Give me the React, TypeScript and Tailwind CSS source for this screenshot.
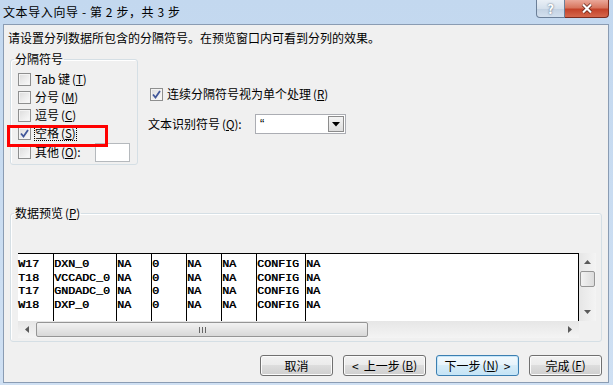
const rows = [
  ['W17', 'DXN_0', 'NA', '0', 'NA', 'NA', 'CONFIG', 'NA'],
  ['T18', 'VCCADC_0', 'NA', '0', 'NA', 'NA', 'CONFIG', 'NA'],
  ['T17', 'GNDADC_0', 'NA', '0', 'NA', 'NA', 'CONFIG', 'NA'],
  ['W18', 'DXP_0', 'NA', '0', 'NA', 'NA', 'CONFIG', 'NA'],
]

// widths of the preview columns, in px (7px per char)
const colWidths = ['w-[35px]', 'w-[63px]', 'w-[35px]', 'w-[35px]', 'w-[35px]', 'w-[35px]', 'w-[49px]', 'flex-1']

function CheckBox({ checked }: { checked?: boolean }) {
  return (
    <span className="w-[13px] h-[13px] shrink-0 border border-[#8e8f8f] bg-[linear-gradient(135deg,#dcdcdc,#fbfbfb)] shadow-[inset_0_0_0_1px_#f4f4f4] flex items-center justify-center">
      {checked && (
        <svg width="9" height="9" viewBox="0 0 9 9">
          <path d="M1 4.5 L3.5 7.5 L8 1" fill="none" stroke="#41579a" strokeWidth="1.8" />
        </svg>
      )}
    </span>
  )
}

function Key({ k }: { k: string }) {
  return (
    <span className="text-[11.5px] ml-[2px]">
      (<span className="underline">{k}</span>)
    </span>
  )
}

function Btn({ children, w, primary }: { children: React.ReactNode; w: string; primary?: boolean }) {
  return (
    <div
      className={
        primary
          ? `${w} h-[21px] rounded-[3px] border border-[#3c7fb1] bg-[linear-gradient(#f2f9fd_0%,#e6f3fb_49%,#d6ecf8_50%,#c4e3f5_100%)] shadow-[inset_0_0_0_1px_#c6e6f9] flex items-center justify-center`
          : `${w} h-[21px] rounded-[3px] border border-[#707070] bg-[linear-gradient(#f2f2f2_0%,#ebebeb_49%,#dddddd_50%,#cfcfcf_100%)] shadow-[inset_0_0_0_1px_#fbfbfb] flex items-center justify-center`
      }
    >
      {children}
    </div>
  )
}

export default function App() {
  return (
    <div className="w-[613px] h-[385px] bg-[linear-gradient(#c3d8ef,#cfe0f3)] flex flex-col text-[12px] text-black font-['Noto_Sans_CJK_SC','Noto_Sans',sans-serif] overflow-hidden">
      {/* title bar */}
      <div className="h-[24px] flex items-start shrink-0">
        <div className="pl-[3px] leading-[24px] flex-1 tracking-[0.6px]">文本导入向导 - 第 2 步，共 3 步</div>
        <div className="w-[29px] h-[18px] mt-0 border border-t-0 border-[#6b7f98] rounded-bl-[4px] bg-[linear-gradient(#e9eff6_0%,#d5e0ec_50%,#c2d1e2_51%,#d3e0ee_100%)] flex items-center justify-center text-white font-bold text-[13px] [text-shadow:0_0_2px_#3b4d66]">
          ?
        </div>
        <div className="w-[44px] h-[18px] mr-[4px] border border-t-0 border-l-0 border-[#7a2b1e] rounded-br-[4px] bg-[linear-gradient(#eaa899_0%,#d8765f_45%,#c4432a_55%,#d5674c_100%)] flex items-center justify-center">
          <svg width="12" height="11" viewBox="0 0 12 11">
            <path d="M2 1.5 L10 9.5 M10 1.5 L2 9.5" stroke="#5a1d12" strokeWidth="3.6" />
            <path d="M2 1.5 L10 9.5 M10 1.5 L2 9.5" stroke="#fff" strokeWidth="2.2" />
          </svg>
        </div>
      </div>

      {/* content panel */}
      <div className="ml-[3px] mr-[4px] mb-[2px] flex-1 border border-[#8a9cb3] bg-[#f0f0f0] flex flex-col relative">
        <div className="mt-[6px] pl-[4px] h-[14px] leading-[14px]">请设置分列数据所包含的分隔符号。在预览窗口内可看到分列的效果。</div>

        <div className="flex items-start mt-[7px]">
          <fieldset className="ml-[6px] w-[128px] h-[113px] border border-[#d5dfe5] rounded-[3px] pl-[3px] shadow-[inset_1px_1px_0_#fff]">
            <legend className="px-[1px] h-[14px] leading-[14px]">分隔符号</legend>
            <div className="pt-[4px] flex flex-col">
              <div className="h-[18px] flex items-center ml-[4px] gap-[4px]">
                <CheckBox />
                <span>Tab 键<Key k="T" /></span>
              </div>
              <div className="h-[18px] flex items-center ml-[4px] gap-[4px]">
                <CheckBox />
                <span>分号<Key k="M" /></span>
              </div>
              <div className="h-[18px] flex items-center ml-[4px] gap-[4px]">
                <CheckBox />
                <span>逗号<Key k="C" /></span>
              </div>
              <div className="h-[18px] flex items-center ml-[4px] gap-[3px]">
                <CheckBox checked />
                <span className="border border-dotted border-black px-0 leading-[13px]">空格<Key k="S" /></span>
              </div>
              <div className="h-[20px] flex items-center ml-[4px] gap-[4px]">
                <CheckBox />
                <span>其他<Key k="O" />:</span>
                <div className="ml-[10px] w-[35px] h-[19px] bg-white border border-[#b5b9bd]" />
              </div>
            </div>
          </fieldset>

          <div className="ml-[10px] flex flex-col">
            <div className="mt-[33px] h-[18px] flex items-center gap-[4px] ml-[2px]">
              <CheckBox checked />
              <span>连续分隔符号视为单个处理<Key k="R" /></span>
            </div>
            <div className="mt-[11px] h-[20px] flex items-center">
              <span className="w-[107px]">文本识别符号<Key k="Q" />:</span>
              <div className="w-[91px] h-[20px] bg-white border border-[#abadb3] flex items-stretch">
                <span className="flex-1 pl-[4px] leading-[18px] font-['Liberation_Sans',sans-serif] text-[13px]">“</span>
                <div className="w-[16px] m-[1px] border border-[#8c8c8c] bg-[linear-gradient(#f4f4f4,#dedede)] flex items-center justify-center">
                  <svg width="8" height="5" viewBox="0 0 8 5">
                    <path d="M0 0 L8 0 L4 4.5 Z" fill="#000" />
                  </svg>
                </div>
              </div>
            </div>
          </div>
        </div>

        {/* preview */}
        <fieldset className="mt-[41px] ml-[6px] w-[592px] h-[136px] border border-[#d5dfe5] rounded-[3px] pl-[3px] shadow-[inset_1px_1px_0_#fff]">
          <legend className="px-[1px] h-[14px] leading-[14px]">数据预览<Key k="P" /></legend>
          <div className="mt-[33px] ml-[4px] w-[578px] flex flex-col">
            <div className="flex h-[68px]">
              <div className="w-[561px] bg-white border-t border-r border-black flex font-['Liberation_Mono',monospace] text-[11.67px] leading-[13.67px] [text-shadow:0.4px_0_0_#000]">
                {colWidths.map((w, ci) => (
                  <div key={ci} className={ci === 0 ? `${w} pt-[4px]` : `${w} pt-[4px] border-l border-black`}>
                    {rows.map((r, ri) => (
                      <div key={ri} className="whitespace-pre">{r[ci]}</div>
                    ))}
                  </div>
                ))}
              </div>
              <div className="w-[17px] bg-[linear-gradient(90deg,#e6e6e6,#f4f4f4)] flex flex-col items-center">
                <svg className="mt-[7px]" width="7" height="4" viewBox="0 0 7 4">
                  <path d="M0 4 L3.5 0 L7 4 Z" fill="#5a5a5a" />
                </svg>
                <div className="mt-[7px] w-[15px] h-[16px] rounded-[2px] border border-[#959595] bg-[linear-gradient(90deg,#f2f2f2,#dcdcdc)]" />
                <div className="flex-1" />
                <svg className="mb-[7px]" width="7" height="4" viewBox="0 0 7 4">
                  <path d="M0 0 L7 0 L3.5 4 Z" fill="#5a5a5a" />
                </svg>
              </div>
            </div>
            <div className="flex h-[17px]">
              <div className="w-[561px] bg-[linear-gradient(#e6e6e6,#f4f4f4)] flex items-center">
                <svg className="ml-[7px]" width="4" height="7" viewBox="0 0 4 7">
                  <path d="M4 0 L0 3.5 L4 7 Z" fill="#5a5a5a" />
                </svg>
                <div className="ml-[7px] w-[332px] h-[15px] rounded-[2px] border border-[#959595] bg-[linear-gradient(#f2f2f2,#d8d8d8)] flex items-center justify-center gap-[2px]">
                  <span className="w-[1px] h-[6px] bg-[#666]" />
                  <span className="w-[1px] h-[6px] bg-[#666]" />
                  <span className="w-[1px] h-[6px] bg-[#666]" />
                </div>
                <div className="flex-1" />
                <svg className="mr-[7px]" width="4" height="7" viewBox="0 0 4 7">
                  <path d="M0 0 L4 3.5 L0 7 Z" fill="#5a5a5a" />
                </svg>
              </div>
              <div className="w-[17px] bg-[#f0f0f0]" />
            </div>
          </div>
        </fieldset>

        {/* buttons */}
        <div className="mt-[13px] flex justify-end gap-[10px] pr-[6px]">
          <Btn w="w-[73px]">取消</Btn>
          <Btn w="w-[83px]">
            <span className="mr-[5px]">&lt;</span>上一步<Key k="B" />
          </Btn>
          <Btn w="w-[83px]" primary>
            下一步<Key k="N" />
            <span className="ml-[5px]">&gt;</span>
          </Btn>
          <Btn w="w-[73px]">完成<Key k="F" /></Btn>
        </div>

        {/* red highlight annotation */}
        <div className="absolute left-[3px] top-[100px] w-[101px] h-[22px] border-[3px] border-[#ff0000]" />
      </div>
    </div>
  )
}
